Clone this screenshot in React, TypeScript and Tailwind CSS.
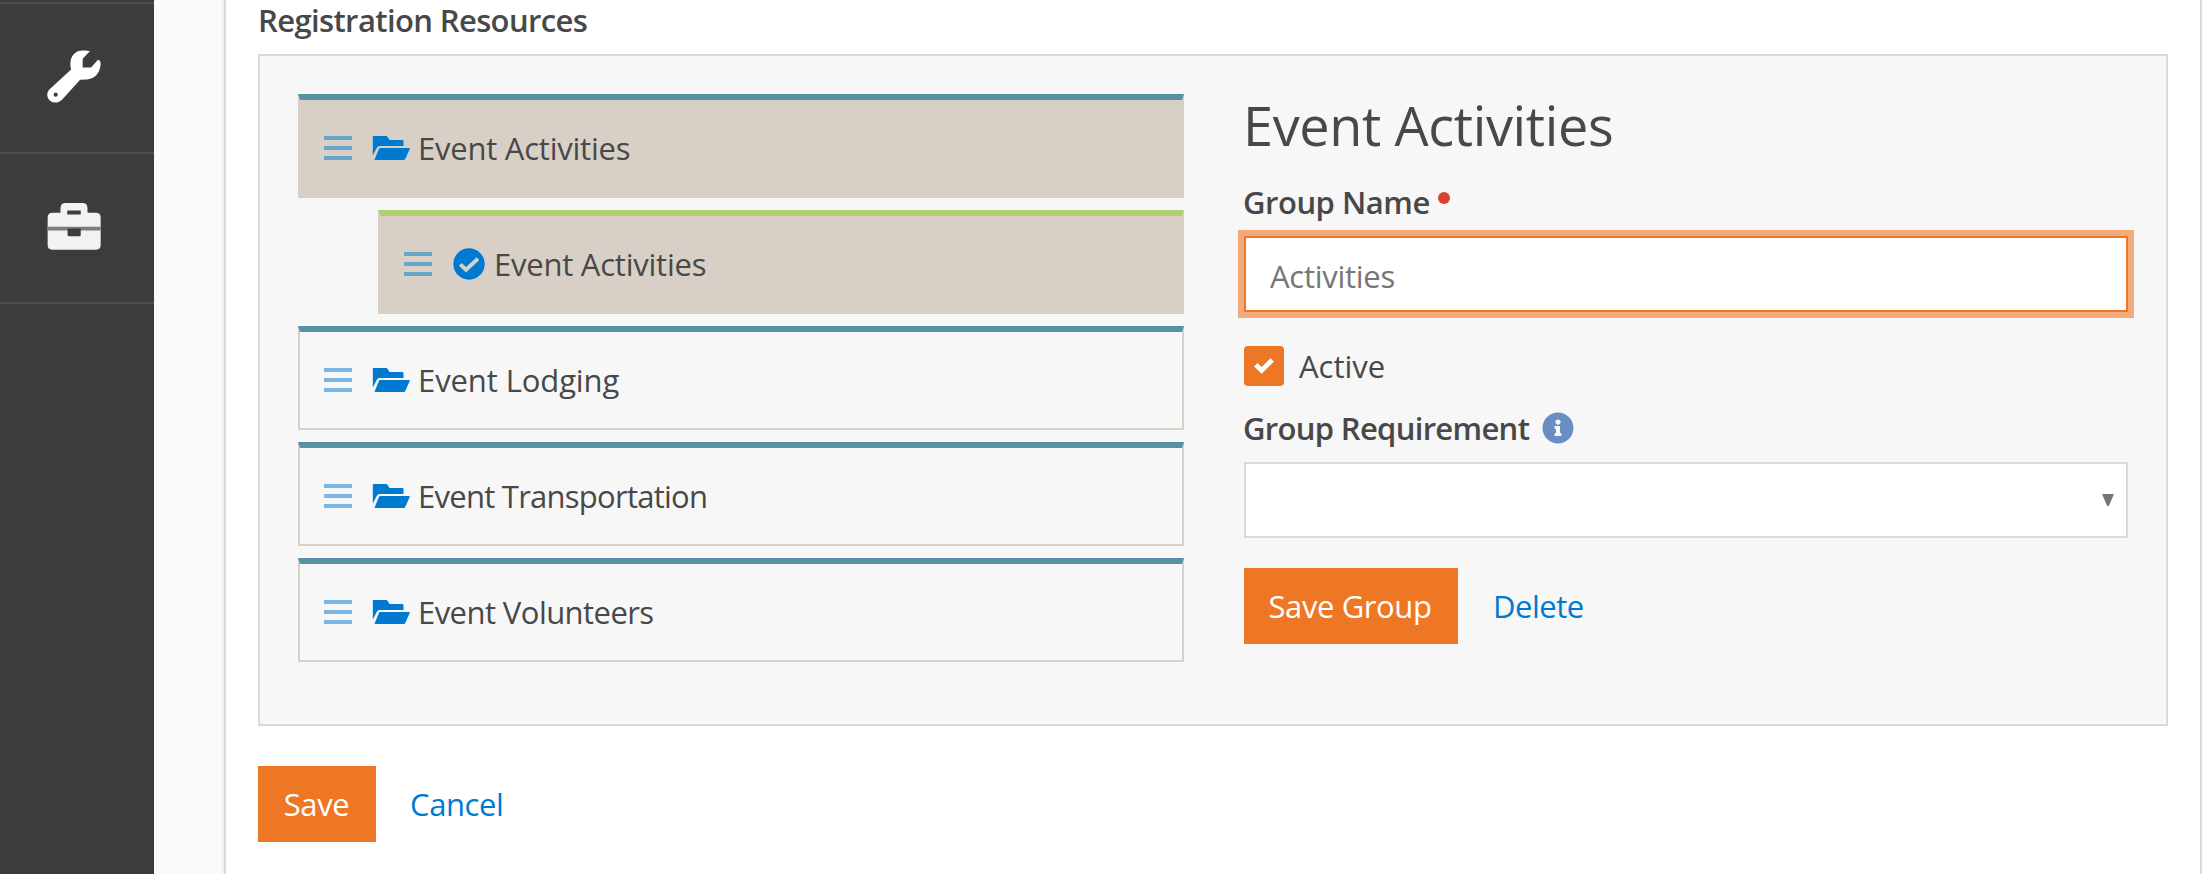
import React from "react";
import { FaInfoCircle } from "react-icons/fa";

type Resource = {
  label: string;
  kind: "group" | "item";
  selected: boolean;
  tracking: string;
};

const resources: Resource[] = [
  { label: "Event Activities", kind: "group", selected: true, tracking: "tracking-[-0.23px]" },
  { label: "Event Activities", kind: "item", selected: true, tracking: "tracking-[-0.23px]" },
  { label: "Event Lodging", kind: "group", selected: false, tracking: "tracking-[-0.1px]" },
  { label: "Event Transportation", kind: "group", selected: false, tracking: "tracking-[-0.74px]" },
  { label: "Event Volunteers", kind: "group", selected: false, tracking: "tracking-[-0.56px]" },
];

function WrenchIcon() {
  return (
    <svg className="h-[53px] w-[54px]" viewBox="0 0 168 162" fill="currentColor">
      <path
        fillRule="evenodd"
        d="M94 3C104-1 124-1 134 2L111 26V53H137L158 30C166 29 168 38 166 50C162 74 146 89 124 90L103 91L46 154C33 165 16 164 7 154C-2 144-1 130 9 120L75 59C70 42 73 22 83 12C87 8 90 5 94 3ZM27 131A6.5 6.5 0 1 0 27 144A6.5 6.5 0 1 0 27 131Z"
      />
    </svg>
  );
}

function BriefcaseIcon() {
  return (
    <svg className="h-[47px] w-[54px]" viewBox="0 0 168 144" preserveAspectRatio="none">
      <path
        fill="#f2f2f2"
        fillRule="evenodd"
        d="M42 30V16Q42 0 58 0H110Q126 0 126 16V30H152Q167 30 167 45V129Q167 143 153 143H16Q2 143 2 129V45Q2 30 17 30ZM63 23V35H105V23Z"
      />
      <path fill="#7e7e7e" d="M2 73H167V84H2Z" />
      <path fill="#3c3c3c" d="M64 78H105V97Q105 102 100 102H69Q64 102 64 97Z" />
    </svg>
  );
}

function FolderOpenIcon() {
  return (
    <svg className="ml-5 h-6 w-[38px] shrink-0" viewBox="0 0 38 24" fill="#007ad1">
      <path d="M1.7 0H14Q15.2 0 15.8 1.2L17.5 4H30.3Q31.5 4 31.5 5.2V10H7.4Q5.8 10 5 11.6L.8 19.5V1Q.8 0 1.7 0Z" />
      <path d="M8.2 12H37.2Q38.1 12 37.7 13L33.4 22.7Q32.8 24 31.4 24H3.4Q2.3 24 2.8 22.9L6.9 12.9Q7.3 12 8.2 12Z" />
    </svg>
  );
}

function CheckCircleIcon() {
  return (
    <svg className="ml-[21px] size-8 shrink-0" viewBox="0 0 32 32">
      <circle cx="16" cy="16" r="15.7" fill="#007ad1" />
      <path d="M7.3 16.4L13 21.8L25 10.6" fill="none" stroke="#d8d0c6" strokeWidth="4" />
    </svg>
  );
}

function DragHandle() {
  return (
    <div className="flex w-7 shrink-0 flex-col gap-1.5 opacity-50">
      <span className="h-1 bg-[#007ad1]" />
      <span className="h-1 bg-[#007ad1]" />
      <span className="h-1 bg-[#007ad1]" />
    </div>
  );
}

function ResourceRow({ label, kind, selected, tracking }: Resource) {
  const group = kind === "group";
  return (
    <li
      className={`flex h-[104px] items-center border-2 border-t-[6px] border-[#d8d0c6] pl-6 ${
        group ? "border-t-[#5692a3]" : "ml-20 border-t-[#aed073]"
      } ${selected ? "bg-[#d8d0c6]" : ""}`}
    >
      <DragHandle />
      {group ? <FolderOpenIcon /> : <CheckCircleIcon />}
      <span className={`${group ? "ml-2" : "ml-[9px]"} ${tracking}`}>{label}</span>
    </li>
  );
}

function Sidebar() {
  return (
    <nav className="flex w-[154px] shrink-0 flex-col bg-[#3c3c3c] pt-0.5">
      <a className="flex h-[150px] items-center justify-center border-t-2 border-[#4e4e4e] pr-1.5 pb-[3px] text-white">
        <WrenchIcon />
      </a>
      <a className="flex h-[150px] items-center justify-center border-t-2 border-[#4e4e4e] pr-1.5 pb-[3px]">
        <BriefcaseIcon />
      </a>
      <div className="border-t-2 border-[#4e4e4e]" />
    </nav>
  );
}

function GroupForm() {
  return (
    <div className="w-[884px]">
      <h2 className="-mt-1 -ml-px h-[70px] text-[54px] leading-[70px] tracking-[-0.36px]">Event Activities</h2>

      <label className="mt-[22px] -ml-px flex h-10 font-semibold tracking-[-0.47px]">
        Group Name
        <span className="mt-[10px] ml-2 size-3 rounded-full bg-[#d9432f]" />
      </label>
      <div className="mt-3.5 flex h-[76px] items-center border-2 border-[#ee7725] bg-white pt-1 pl-6 tracking-[-0.28px] text-[#767676] ring-6 ring-[#f4a97a]">
        Activities
      </div>

      <div className="mt-[34px] flex h-10 items-center">
        <span className="flex size-10 items-center justify-center rounded bg-[#ee7725]">
          <svg className="h-4 w-5" viewBox="0 0 20 16" fill="none" stroke="white" strokeWidth="4.8">
            <path d="M1.8 6.8L7.6 12.4L18.2 2" />
          </svg>
        </span>
        <span className="ml-[15px]">Active</span>
      </div>

      <div className="mt-[22px] -ml-px flex h-10 items-center">
        <span className="font-semibold tracking-[-0.68px]">Group Requirement</span>
        <FaInfoCircle className="ml-[13px] size-8 text-[#6a8ec4]" />
      </div>
      <div className="mt-3.5 flex h-[76px] items-center justify-end border-2 border-[#d9d9d9] bg-white pr-3">
        <svg className="h-3 w-3" viewBox="0 0 12 12" fill="#767676">
          <path d="M0 0H12L6.8 12H5.2Z" />
        </svg>
      </div>

      <div className="mt-[30px] flex h-[76px] items-center">
        <button className="h-[76px] w-[214px] bg-[#ee7725] pr-0.5 tracking-[-0.39px] text-white">Save Group</button>
        <a className="ml-[35px] tracking-[-0.5px] text-[#007ad1]">Delete</a>
      </div>
    </div>
  );
}

export default function App() {
  return (
    <div className="flex h-[874px] w-[2202px] overflow-hidden bg-[#fafafa] font-['Open_Sans',sans-serif] text-[31px] leading-10 text-[#484848]">
      <Sidebar />
      <main className="ml-[70px] w-[1978px] shrink-0 border-x-2 border-[#dadada] bg-white px-8 shadow-[0_0_0_2px_#f1f1f1]">
        <h1 className="h-10 font-semibold tracking-[-0.62px]">Registration Resources</h1>

        <section className="mt-3.5 flex h-[672px] w-[1910px] border-2 border-[#d9d9d9] bg-[#f7f7f7] pt-[38px] pl-[38px]">
          <ul className="flex w-[886px] flex-col gap-3">
            {resources.map((resource, index) => (
              <ResourceRow key={index} {...resource} />
            ))}
          </ul>
          <div className="ml-[60px]">
            <GroupForm />
          </div>
        </section>

        <div className="mt-10 flex h-[76px] items-center">
          <button className="h-[76px] w-[118px] bg-[#ee7725] pr-px tracking-[-0.4px] text-white">Save</button>
          <a className="ml-[34px] tracking-[-0.38px] text-[#007ad1]">Cancel</a>
        </div>
      </main>
    </div>
  );
}
